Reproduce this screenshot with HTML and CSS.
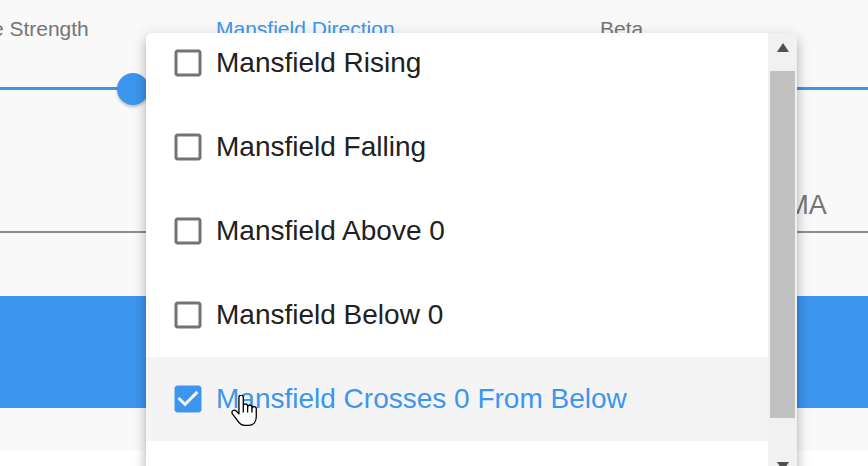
FILE: index.html
```html
<!DOCTYPE html>
<html lang="en">
<head>
    <meta charset="UTF-8">
    <title>Mansfield Scan</title>
    <link rel="stylesheet" href="styles.css">
</head>
<body>

    <div class="screen">
        <main class="panel">
            <div class="fields">
                <div class="field">
                    <label class="field-label">Mansfield Relative Strength</label>
                    <div class="slider">
                        <div class="slider-rail"></div>
                        <div class="slider-track" style="width:85.5%"></div>
                        <div class="slider-thumb" style="left:85.5%"></div>
                    </div>
                    <div class="field-input">52</div>
                </div>
                <div class="field">
                    <label class="field-label focused">Mansfield Direction</label>
                    <div class="slider">
                        <div class="slider-rail"></div>
                        <div class="slider-track" style="width:40%"></div>
                        <div class="slider-thumb" style="left:40%"></div>
                    </div>
                    <div class="field-input">1 selected</div>
                </div>
                <div class="field">
                    <label class="field-label">Beta</label>
                    <div class="slider">
                        <div class="slider-rail"></div>
                        <div class="slider-track" style="width:92%"></div>
                        <div class="slider-thumb" style="left:92%"></div>
                    </div>
                    <div class="field-input">Exponential 30 MA</div>
                </div>
            </div>
            <button class="run">Run Scan</button>
        </main>

        <!-- open multi-select dropdown -->
        <div class="menu">
            <ul class="menu-list">
                <li class="menu-item">
                    <svg class="check" viewBox="0 0 24 24"><path d="M19 5v14H5V5h14m0-2H5c-1.1 0-2 .9-2 2v14c0 1.1.9 2 2 2h14c1.1 0 2-.9 2-2V5c0-1.1-.9-2-2-2z"/></svg>
                    <span>Mansfield Rising</span>
                </li>
                <li class="menu-item">
                    <svg class="check" viewBox="0 0 24 24"><path d="M19 5v14H5V5h14m0-2H5c-1.1 0-2 .9-2 2v14c0 1.1.9 2 2 2h14c1.1 0 2-.9 2-2V5c0-1.1-.9-2-2-2z"/></svg>
                    <span>Mansfield Falling</span>
                </li>
                <li class="menu-item">
                    <svg class="check" viewBox="0 0 24 24"><path d="M19 5v14H5V5h14m0-2H5c-1.1 0-2 .9-2 2v14c0 1.1.9 2 2 2h14c1.1 0 2-.9 2-2V5c0-1.1-.9-2-2-2z"/></svg>
                    <span>Mansfield Above 0</span>
                </li>
                <li class="menu-item">
                    <svg class="check" viewBox="0 0 24 24"><path d="M19 5v14H5V5h14m0-2H5c-1.1 0-2 .9-2 2v14c0 1.1.9 2 2 2h14c1.1 0 2-.9 2-2V5c0-1.1-.9-2-2-2z"/></svg>
                    <span>Mansfield Below 0</span>
                </li>
                <li class="menu-item selected">
                    <svg class="check" viewBox="0 0 24 24"><path d="M19 3H5c-1.11 0-2 .9-2 2v14c0 1.1.89 2 2 2h14c1.11 0 2-.9 2-2V5c0-1.1-.89-2-2-2zm-9 14l-5-5 1.41-1.41L10 14.17l7.59-7.59L19 8l-9 9z"/></svg>
                    <span>Mansfield Crosses 0 From Below</span>
                </li>
                <li class="menu-item">
                    <svg class="check" viewBox="0 0 24 24"><path d="M19 5v14H5V5h14m0-2H5c-1.1 0-2 .9-2 2v14c0 1.1.9 2 2 2h14c1.1 0 2-.9 2-2V5c0-1.1-.9-2-2-2z"/></svg>
                    <span>Mansfield Crosses 0 From Above</span>
                </li>
            </ul>
            <div class="scrollbar">
                <div class="sb-up"><span class="arrow-up"></span></div>
                <div class="sb-thumb"></div>
                <div class="sb-down"><span class="arrow-down"></span></div>
            </div>
        </div>

        <svg class="cursor" viewBox="0 0 18 22">
            <path d="M5.5 1.5C5.5 .7 6.2 0 7 0s1.5.7 1.5 1.5V7.5C8.5 6.7 9.2 6 10 6s1.5.7 1.5 1.5v1c0-.8.7-1.5 1.5-1.5s1.5.7 1.5 1.5v1c0-.8.7-1.5 1.5-1.5s1.5.7 1.5 1.5V15c0 3.5-2 6-5.5 6H9.5c-2 0-3.2-1-4.2-2.3L1 13c-.6-.8-.4-1.8.4-2.3.7-.5 1.6-.3 2.2.3L5.5 13z" fill="#fff" stroke="#000" stroke-width=".9" stroke-linejoin="round"/>
            <path d="M8.5 7.5V12M11.5 8.5V12M14.5 9.5V12" fill="none" stroke="#000" stroke-width=".9"/>
        </svg>
    </div>

</body>
</html>
```

FILE: styles.css
```css
html, body {
    margin: 0;
    overflow: hidden;
}

body {
    font-family: 'Liberation Sans', Arial, sans-serif;
    background-color: #fff;
    width: 868px;
    height: 466px;
}

.screen {
    position: relative;
    width: 868px;
    height: 466px;
    overflow: hidden;
}

.panel {
    background-color: #f9f9f9;
    padding: 17px 0 42px;
}

.fields {
    display: grid;
    grid-template-columns: repeat(3, 352px);
    column-gap: 32px;
    margin-left: -168px;
}

.field {
    display: flex;
    flex-direction: column;
}

.field-label {
    font-size: 21px;
    line-height: 24px;
    color: #757575;
    white-space: nowrap;
}

.field-label.focused {
    color: #3d96ee;
}

.slider {
    position: relative;
    height: 32px;
    margin-top: 32px;
}

.slider-rail,
.slider-track {
    position: absolute;
    left: 0;
    top: 14px;
    height: 3px;
    background-color: #3d96ee;
}

.slider-rail {
    width: 100%;
    opacity: 0.38;
}

.slider-thumb {
    position: absolute;
    top: 0;
    width: 32px;
    height: 32px;
    margin-left: -16px;
    border-radius: 50%;
    background-color: #3d96ee;
    box-shadow: 0 2px 3px rgba(0,0,0,0.25);
}

.field-input {
    margin-top: 84px;
    font-size: 27px;
    line-height: 32px;
    padding-bottom: 10px;
    color: #757575;
    border-bottom: 2px solid #8d8d8d;
    white-space: nowrap;
}

.run {
    display: block;
    width: 100%;
    height: 112px;
    margin-top: 63px;
    border: none;
    background-color: #3d96ee;
    color: #fff;
    font-family: inherit;
    font-size: 26px;
    text-transform: uppercase;
}

.menu {
    position: absolute;
    left: 146px;
    top: 33px;
    width: 651px;
    height: 460px;
    display: flex;
    background-color: #fff;
    border-radius: 6px;
    overflow: hidden;
    box-shadow: 0 5px 5px -3px rgba(0,0,0,0.2), 0 8px 10px 1px rgba(0,0,0,0.14), 0 3px 14px 2px rgba(0,0,0,0.12);
}

.menu-list {
    flex: 1;
    list-style: none;
    margin: -12px 0 0;
    padding: 0;
}

.menu-item {
    display: flex;
    align-items: center;
    gap: 10px;
    height: 84px;
    padding-left: 24px;
    font-size: 28px;
    color: #212121;
    white-space: nowrap;
}

.menu-item .check {
    width: 36px;
    height: 36px;
    fill: #737373;
    flex-shrink: 0;
}

.menu-item.selected {
    background-color: #f4f4f4;
    color: #3d96ee;
}

.menu-item.selected .check {
    fill: #3d96ee;
}

.scrollbar {
    width: 29px;
    background-color: #f1f1f1;
    display: flex;
    flex-direction: column;
    align-items: center;
}

.sb-up {
    height: 38px;
    padding-top: 10px;
    box-sizing: border-box;
}

.sb-thumb {
    width: 25px;
    height: 347px;
    background-color: #c1c1c1;
}

.sb-down {
    padding-top: 44px;
}

.arrow-up,
.arrow-down {
    display: block;
    width: 0;
    height: 0;
    border-left: 6.5px solid transparent;
    border-right: 6.5px solid transparent;
}

.arrow-up {
    border-bottom: 9px solid #505050;
}

.arrow-down {
    border-top: 9px solid #505050;
}

.cursor {
    position: absolute;
    left: 231px;
    top: 395px;
    width: 26px;
    height: 32px;
}
```
